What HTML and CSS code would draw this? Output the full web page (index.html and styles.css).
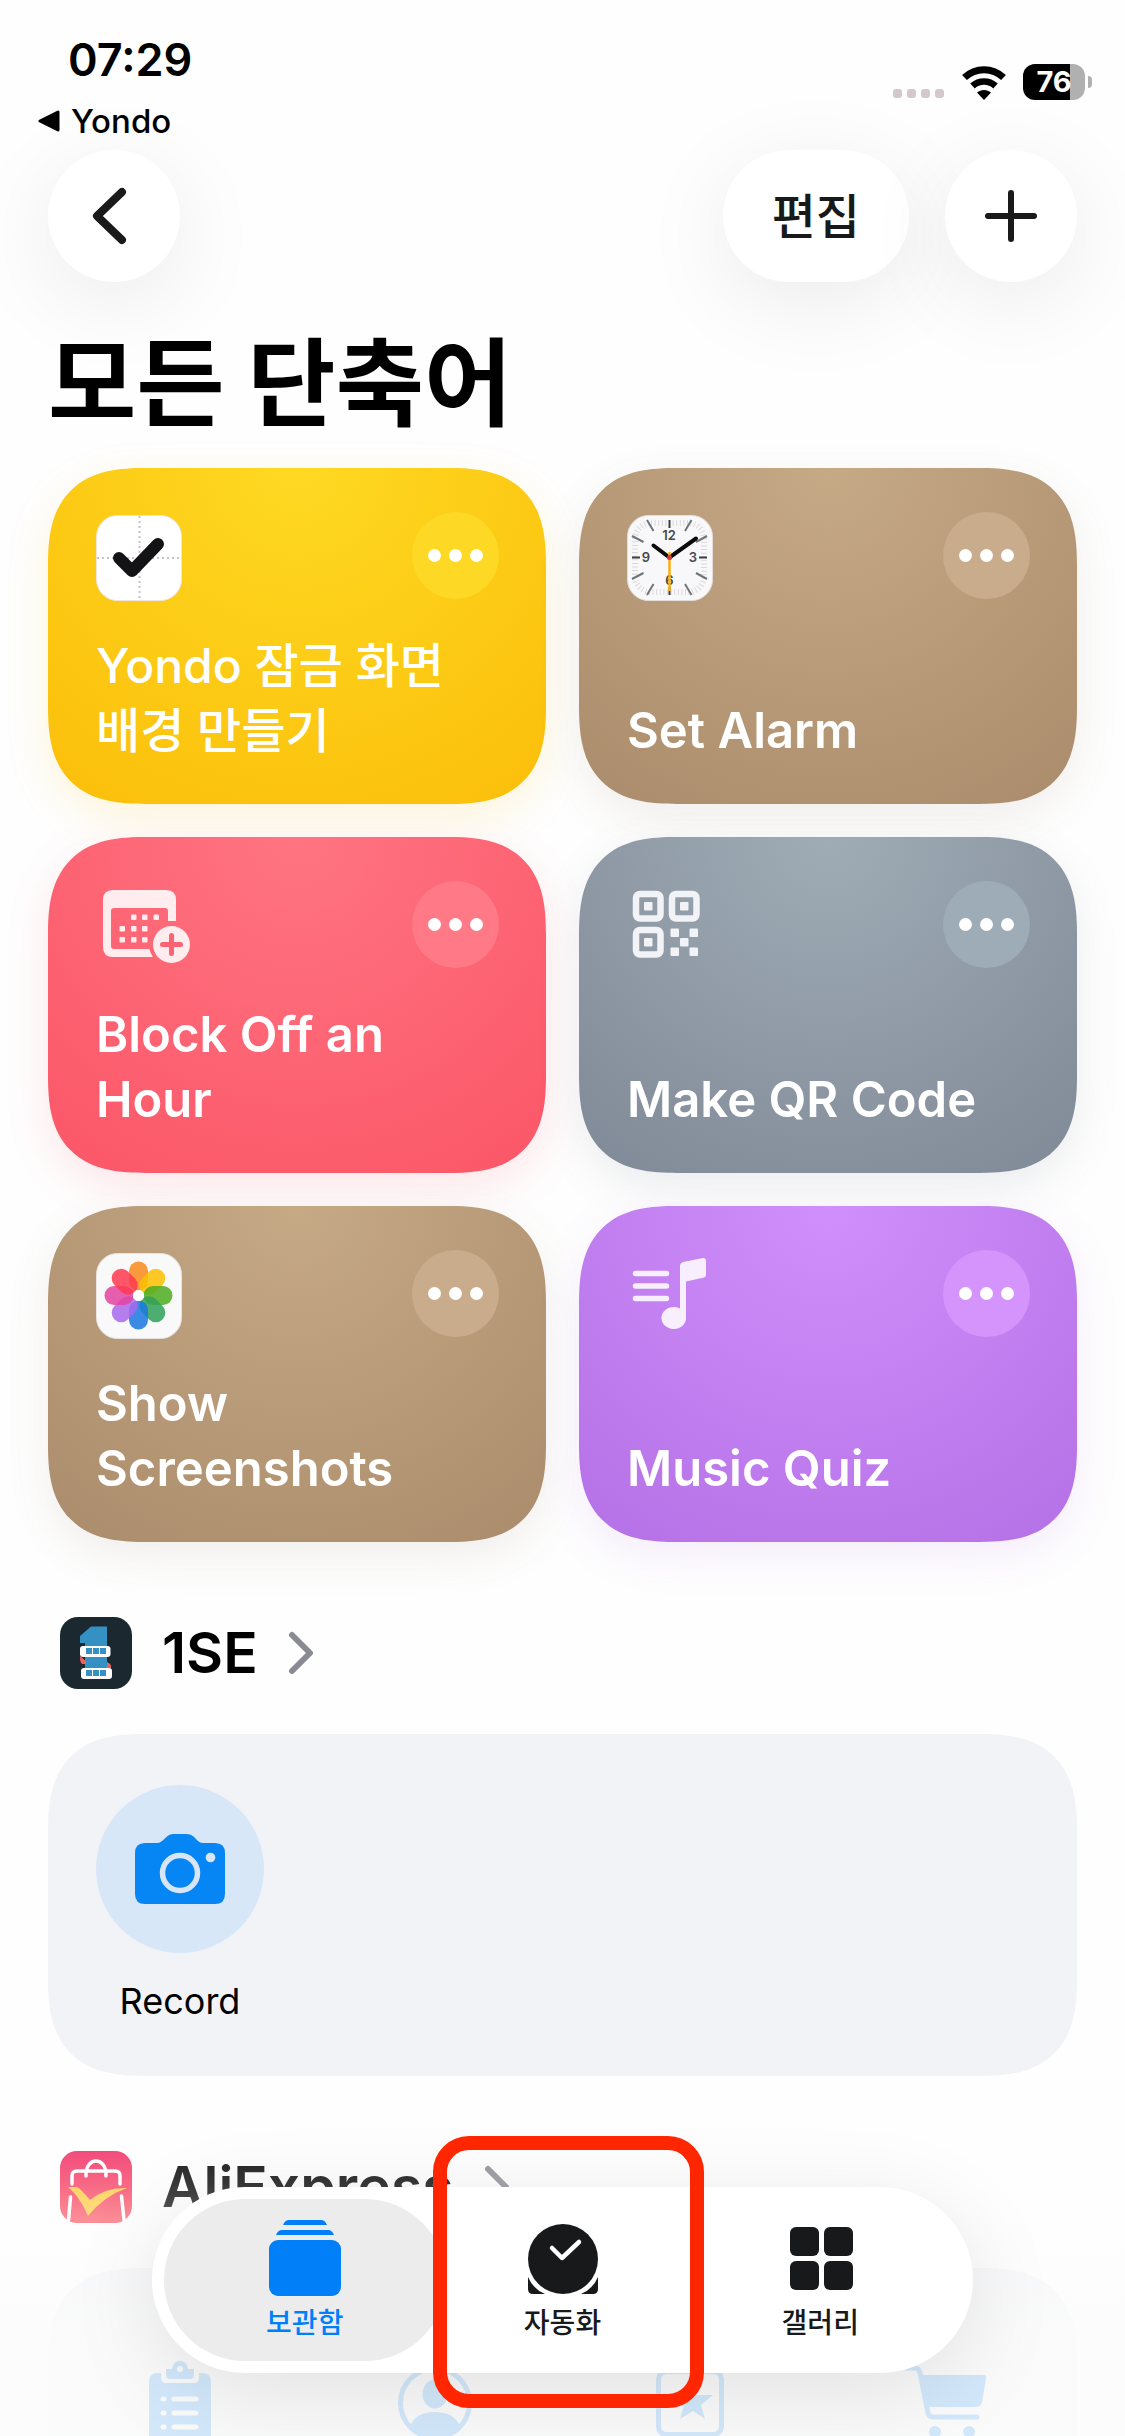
FILE: index.html
```
<!DOCTYPE html>
<html lang="ko">
<head>
  <meta charset="UTF-8" />
  <meta name="viewport" content="width=device-width, initial-scale=1.0"/>
  <title>모든 단축어</title>
  <link rel="stylesheet" href="styles.css">
</head>
<body>
<div class="screen">

  <div class="status-bar">
    <div class="status-left">
      <div class="time">07:29</div>
      <a class="back-app" href="#">
        <svg width="22" height="22" viewBox="0 0 22 22"><path d="M2 11L20 2V20Z" fill="#000" stroke="#000" stroke-width="3" stroke-linejoin="round"/></svg>
        Yondo
      </a>
    </div>
    <div class="status-right">
      <svg class="signal" width="52" height="10" viewBox="0 0 52 10" fill="#d3c9cd">
        <rect width="9" height="9" rx="3"/><rect x="14" width="9" height="9" rx="3"/><rect x="28" width="9" height="9" rx="3"/><rect x="42" width="9" height="9" rx="3"/>
      </svg>
      <svg width="46" height="34" viewBox="0 0 46 34">
        <path d="M3.5 11.5C14.500 1 31.500 1 42.500 11.500" fill="none" stroke="#000" stroke-width="7"/>
        <path d="M11.500 20C18 14 28 14 34.500 20" fill="none" stroke="#000" stroke-width="6.500"/>
        <path d="M23 34L16 26.500C20 23 26 23 30 26.500Z"/>
      </svg>
      <div class="battery"><span>76</span></div>
    </div>
  </div>

  <header class="toolbar">
    <button class="round-btn" aria-label="뒤로">
      <svg width="56" height="60" viewBox="0 0 56 60" fill="none" stroke="#1a1a1a" stroke-width="8" stroke-linecap="round" stroke-linejoin="round"><path d="M36 6L11 30L36 54"/></svg>
    </button>
    <div class="toolbar-right">
      <button class="round-btn edit-btn">편집</button>
      <button class="round-btn" aria-label="추가">
        <svg width="54" height="54" viewBox="0 0 54 54" stroke="#1a1a1a" stroke-width="6" stroke-linecap="round"><path d="M27 4V50M4 27H50"/></svg>
      </button>
    </div>
  </header>

  <main>
    <h1>모든 단축어</h1>

    <section class="cards">
      <article class="card yellow">
        <div class="card-top">
          <svg class="card-icon" width="86" height="86" viewBox="0 0 86 86">
            <rect x="0.500" y="0.500" width="85" height="85" rx="21" fill="#fff" stroke="#efe4e0"/>
            <path d="M43.500 1V85M1 43H85" stroke="#cbbfc9" stroke-width="2" stroke-dasharray="2 3"/>
            <path d="M23 43L36 56L62 29" fill="none" stroke="#131315" stroke-width="12" stroke-linecap="round" stroke-linejoin="round"/>
          </svg>
          <button class="more" aria-label="더 보기"><i></i><i></i><i></i></button>
        </div>
        <h2>Yondo 잠금 화면<br>배경 만들기</h2>
      </article>

      <article class="card brown">
        <div class="card-top">
          <svg class="card-icon" width="86" height="86" viewBox="0 0 86 86">
            <rect x="0.500" y="0.500" width="85" height="85" rx="21" fill="#f8f8fa" stroke="#e3dedd"/>
            <rect x="8" y="8" width="69" height="69" rx="16" fill="none" stroke="#dcd7db" stroke-width="6" stroke-dasharray="1 2.600"/>
            <g stroke="#6f757a" stroke-width="2">
              <path d="M20 5L26.500 16M64.500 5L58 16M5 21L16.500 27M80 21L69 27M5 64L16.500 58M80 64L69 58M20 80L26.500 69M64.500 80L58 69"/>
              <path d="M42.500 5V13M42.500 72V80M5 42.500H13M72 42.500H80" stroke="#3c3c3f"/>
            </g>
            <g font-size="13" font-weight="600" fill="#46484c" text-anchor="middle">
              <text x="42" y="25">12</text><text x="66" y="47">3</text><text x="42.500" y="70">6</text><text x="19" y="47">9</text>
            </g>
            <path d="M26.500 30.500L42.500 42.500L69 23.500" fill="none" stroke="#0b0b0c" stroke-width="4" stroke-linecap="round"/>
            <path d="M42.500 37V76" stroke="#f9ae12" stroke-width="2.500"/>
            <circle cx="42.500" cy="42.500" r="2.500" fill="#d8323a"/>
          </svg>
          <button class="more" aria-label="더 보기"><i></i><i></i><i></i></button>
        </div>
        <h2>Set Alarm</h2>
      </article>

      <article class="card red">
        <div class="card-top">
          <svg class="card-icon" width="96" height="86" viewBox="0 0 96 86" fill="#fff" fill-opacity="0.880">
            <mask id="badge-cut">
              <rect width="96" height="86" fill="#fff" fill-opacity="1"/>
              <circle cx="75.500" cy="60.500" r="22.500" fill="#000" fill-opacity="1"/>
            </mask>
            <g mask="url(#badge-cut)">
              <path fill-rule="evenodd" d="M17 6H70Q80 6 80 16V37H72V27Q72 24 69 24H18Q15 24 15 27V62Q15 65 18 65H60V73H17Q7 73 7 63V16Q7 6 17 6Z"/>
              <rect x="35" y="30.500" width="5.500" height="5.500" rx="1"/><rect x="46" y="30.500" width="5.500" height="5.500" rx="1"/><rect x="57.500" y="30.500" width="5.500" height="5.500" rx="1"/>
              <rect x="23.500" y="42" width="5.500" height="5.500" rx="1"/><rect x="35" y="42" width="5.500" height="5.500" rx="1"/><rect x="46" y="42" width="5.500" height="5.500" rx="1"/>
              <rect x="23.500" y="53" width="5.500" height="5.500" rx="1"/><rect x="35" y="53" width="5.500" height="5.500" rx="1"/><rect x="46" y="53" width="5.500" height="5.500" rx="1"/>
            </g>
            <circle cx="75.500" cy="60.500" r="18.500"/>
            <path d="M75.500 51.500V69.500M66.500 60.500H84.500" stroke="#fe6373" stroke-width="5" stroke-linecap="round"/>
          </svg>
          <button class="more" aria-label="더 보기"><i></i><i></i><i></i></button>
        </div>
        <h2>Block Off an<br>Hour</h2>
      </article>

      <article class="card gray">
        <div class="card-top">
          <svg class="card-icon" width="86" height="86" viewBox="0 0 86 86" fill="#f2f3f6">
            <g fill="none" stroke="#f2f3f6" stroke-width="6.500">
              <rect x="9" y="10" width="24.500" height="24.500" rx="4"/>
              <rect x="45" y="10" width="24.500" height="24.500" rx="4"/>
              <rect x="9" y="46" width="24.500" height="24.500" rx="4"/>
            </g>
            <rect x="17" y="18" width="8.500" height="8.500" rx="1"/><rect x="53" y="18" width="8.500" height="8.500" rx="1"/><rect x="17" y="54" width="8.500" height="8.500" rx="1"/>
            <rect x="43.500" y="44.500" width="8.500" height="8.500" rx="1"/><rect x="62.500" y="44.500" width="8.500" height="8.500" rx="1"/>
            <rect x="53" y="54" width="8.500" height="8.500" rx="1"/>
            <rect x="43.500" y="63.500" width="8.500" height="8.500" rx="1"/><rect x="62.500" y="63.500" width="8.500" height="8.500" rx="1"/>
          </svg>
          <button class="more" aria-label="더 보기"><i></i><i></i><i></i></button>
        </div>
        <h2>Make QR Code</h2>
      </article>

      <article class="card brown">
        <div class="card-top">
          <svg class="card-icon" width="86" height="86" viewBox="0 0 86 86">
            <rect x="0.500" y="0.500" width="85" height="85" rx="21" fill="#f9f9fa" stroke="#e8e2e0"/>
            <g fill-opacity="0.850">
              <rect x="33" y="8.500" width="19" height="29" rx="9.500" fill="#f98a1a"/>
              <rect x="33" y="8.500" width="19" height="29" rx="9.500" fill="#fcc000" transform="rotate(45 42.500 42.500)"/>
              <rect x="33" y="8.500" width="19" height="29" rx="9.500" fill="#4cad20" transform="rotate(90 42.500 42.500)"/>
              <rect x="33" y="8.500" width="19" height="29" rx="9.500" fill="#30a058" transform="rotate(135 42.500 42.500)"/>
              <rect x="33" y="8.500" width="19" height="29" rx="9.500" fill="#1a78e0" transform="rotate(180 42.500 42.500)"/>
              <rect x="33" y="8.500" width="19" height="29" rx="9.500" fill="#a868ec" transform="rotate(225 42.500 42.500)"/>
              <rect x="33" y="8.500" width="19" height="29" rx="9.500" fill="#e443a0" transform="rotate(270 42.500 42.500)"/>
              <rect x="33" y="8.500" width="19" height="29" rx="9.500" fill="#ff3a4e" transform="rotate(315 42.500 42.500)"/>
            </g>
            <circle cx="42.500" cy="42.500" r="5.500" fill="#fff"/>
          </svg>
          <button class="more" aria-label="더 보기"><i></i><i></i><i></i></button>
        </div>
        <h2>Show<br>Screenshots</h2>
      </article>

      <article class="card purple">
        <div class="card-top">
          <svg class="card-icon" width="86" height="86" viewBox="0 0 86 86" fill="#f7effd">
            <path d="M8.500 20.500H39.500M8.500 33H39.500M8.500 45.500H39.500" stroke="#f7effd" stroke-width="5.500" stroke-linecap="round"/>
            <path d="M53 13Q53 10 56 9L76 5Q79 4.500 79 7.500V22Q79 24 77 24.500L59 28.500V66A12.300 11 0 1 1 53 55.500Z"/>
          </svg>
          <button class="more" aria-label="더 보기"><i></i><i></i><i></i></button>
        </div>
        <h2>Music Quiz</h2>
      </article>
    </section>

    <section class="app-section">
      <a class="app-head" href="#">
        <svg width="72" height="72" viewBox="0 0 72 72">
          <rect width="72" height="72" rx="18" fill="#1b2830"/>
          <path d="M20 19L31 9.500H47V61H25V26H20Z" fill="#3590c4"/>
          <path d="M20 39L26 44V47H22Q20 45 20 42ZM51 51Q52 47 47 45V52Z" fill="#f0605c"/>
          <rect x="20" y="29" width="30.500" height="11" rx="3" fill="#fff"/>
          <rect x="21" y="51" width="31" height="11" rx="3" fill="#fff"/>
          <g fill="#3590c4">
            <rect x="26" y="31" width="6" height="6"/><rect x="33" y="31" width="6" height="6"/><rect x="40" y="31" width="6" height="6"/>
            <rect x="26" y="53" width="6" height="6"/><rect x="33" y="53" width="6" height="6"/><rect x="40" y="53" width="6" height="6"/>
          </g>
        </svg>
        <h2>1SE</h2>
        <svg class="chevron" width="26" height="44" viewBox="0 0 26 44"><path d="M4 4L22 22L4 40"/></svg>
      </a>
      <div class="panel">
        <button class="action">
          <span class="action-icon">
            <svg width="90" height="70" viewBox="0 0 90 70">
              <path fill="#0686f5" d="M10 9H22Q25 9 27 7L32 2.500Q34 0 38 0H52Q56 0 58.500 2.500L63 7Q65 9 68 9H80Q90 9 90 19V60Q90 70 80 70H10Q0 70 0 60V19Q0 9 10 9Z"/>
              <circle cx="45" cy="39" r="17.500" fill="none" stroke="#d8e5f6" stroke-width="5.500"/>
              <circle cx="75.500" cy="23.500" r="4.800" fill="#d8e5f6"/>
            </svg>
          </span>
          Record
        </button>
      </div>
    </section>

    <section class="app-section">
      <a class="app-head" href="#">
        <svg width="72" height="72" viewBox="0 0 72 72">
          <defs><linearGradient id="ali" x1="0" y1="0" x2="0" y2="1"><stop offset="0" stop-color="#f0306a"/><stop offset="1" stop-color="#fb4c58"/></linearGradient></defs>
          <rect width="72" height="72" rx="17" fill="url(#ali)"/>
          <g fill="none" stroke="#fff" stroke-width="3.500" stroke-linecap="round">
            <path d="M26 25C25 5 47 5 46 25M12 33V25Q12 20 17 20H55Q60 20 60 25V33M10.500 46L8.500 69M61.500 45L64 69"/>
          </g>
          <path d="M8 36H17Q21 38 30 49Q46 36 67 37Q44 45 28 65Q20 46 8 36Z" fill="#ffc83c"/>
        </svg>
        <h2>AliExpress</h2>
        <svg class="chevron" width="26" height="44" viewBox="0 0 26 44"><path d="M4 4L22 22L4 40"/></svg>
      </a>
      <div class="panel plain">
        <button class="action" aria-label="주문">
          <span class="action-icon">
            <svg width="62" height="84" viewBox="0 0 62 84">
              <path fill="#0686f5" d="M9 12H12V17Q12 22 17 22H45Q50 22 50 17V12H53Q62 12 62 21V75Q62 84 53 84H9Q0 84 0 75V21Q0 12 9 12ZM17 8H23Q24 0 31 0Q38 0 39 8H45V14Q45 18 41 18H21Q17 18 17 14Z"/>
              <path d="M14 38H15M25 38H47M14 52H15M25 52H47M14 66H15M25 66H47" stroke="#f2f3f6" stroke-width="5" stroke-linecap="round"/>
              <circle cx="31" cy="8" r="3" fill="#f2f3f6"/>
            </svg>
          </span>
        </button>
        <button class="action" aria-label="계정">
          <span class="action-icon">
            <svg width="74" height="74" viewBox="0 0 74 74" fill="#0686f5">
              <circle cx="37" cy="37" r="34.500" fill="none" stroke="#0686f5" stroke-width="5"/>
              <ellipse cx="37" cy="28" rx="12.500" ry="14.500"/>
              <path d="M12 60Q18 46 37 46Q56 46 62 60Q50 71 37 71Q24 71 12 60Z"/>
            </svg>
          </span>
        </button>
        <button class="action" aria-label="위시리스트">
          <span class="action-icon">
            <svg width="68" height="68" viewBox="0 0 68 68" fill="#0686f5">
              <rect x="2.500" y="2.500" width="63" height="63" rx="8" fill="none" stroke="#0686f5" stroke-width="5"/>
              <path d="M37 12L41.500 26H57L45 36L49 50L37 42L24 50L28 36L16 26H32Z"/>
            </svg>
          </span>
        </button>
        <button class="action" aria-label="장바구니">
          <span class="action-icon">
            <svg width="84" height="76" viewBox="0 0 84 76" fill="#0686f5">
              <path d="M3 3H12Q16 3 17 8L25 48Q26 52 30 52H74" fill="none" stroke="#0686f5" stroke-width="5" stroke-linecap="round"/>
              <path d="M19 10H81Q84 10 83 14L79 37Q78 42 73 42H26Z"/>
              <circle cx="32" cy="67" r="6"/><circle cx="66" cy="67" r="6"/>
            </svg>
          </span>
        </button>
      </div>
    </section>
  </main>

  <footer class="tab-area">
    <nav class="tab-bar">
      <button class="tab active">
        <svg width="72" height="78" viewBox="0 0 72 78" fill="#007ff9">
          <path d="M14 6Q16 1 20 1H52Q56 1 58 6ZM7 16Q9 11 13 11H59Q63 11 65 16Z"/>
          <rect y="21" width="72" height="56" rx="9"/>
        </svg>
        보관함
      </button>
      <button class="tab marked">
        <svg width="72" height="78" viewBox="0 0 72 78" fill="#18191a">
          <circle cx="36" cy="40" r="35"/>
          <path d="M1 58Q6 70 18 75H6Q1 75 1 70ZM71 58Q66 70 54 75H66Q71 75 71 70Z"/>
          <path d="M25 29L35 39L52 23" fill="none" stroke="#fff" stroke-width="4.500" stroke-linecap="round" stroke-linejoin="round"/>
        </svg>
        자동화
      </button>
      <button class="tab">
        <svg width="72" height="78" viewBox="0 0 72 78" fill="#18191a">
          <rect x="6" y="8" width="29" height="29" rx="6"/><rect x="40" y="8" width="29" height="29" rx="6"/>
          <rect x="6" y="42" width="29" height="29" rx="6"/><rect x="40" y="42" width="29" height="29" rx="6"/>
        </svg>
        갤러리
      </button>
    </nav>
  </footer>

</div>
</body>
</html>
```
FILE: styles.css
```
:root {
  --blue: #007ff9;
  --ink: #18191a;
  --panel: #f2f3f6;
  --gutter: 48px;
}

* {
  box-sizing: border-box;
}

body {
  margin: 0;
  background: #fefefe;
  color: #000;
  font-family: Inter, "Noto Sans CJK KR", sans-serif;
}

h1, h2 {
  margin: 0;
}

a {
  color: inherit;
  text-decoration: none;
}

button {
  border: none;
  padding: 0;
  background: none;
  font-family: inherit;
  color: inherit;
  cursor: pointer;
}

svg {
  display: block;
  flex: none;
}

.screen {
  position: relative;
  height: 100vh;
  overflow: hidden;
}

/* status bar */
.status-bar {
  display: flex;
  justify-content: space-between;
  height: 150px;
  padding: 33px 32px 0 38px;
}

.time {
  padding-left: 30px;
  font-size: 45px;
  line-height: 54px;
  font-weight: 600;
}

.back-app {
  display: flex;
  align-items: center;
  gap: 11px;
  margin-top: 14px;
  font-size: 33px;
  line-height: 40px;
  font-weight: 500;
}

.status-right {
  display: flex;
  align-items: flex-end;
  gap: 16px;
  height: 67px;
}

.signal {
  margin-bottom: 1px;
}

.battery {
  position: relative;
  width: 62px;
  height: 36px;
  margin-right: 8px;
  border-radius: 12px;
  background: linear-gradient(90deg, #000 76%, #b0b0b0 76%);
  color: #fff;
  font-size: 29px;
  line-height: 36px;
  font-weight: 700;
  text-align: center;
}

.battery::after {
  content: "";
  position: absolute;
  left: 65px;
  top: 12px;
  width: 4px;
  height: 12px;
  border-radius: 0 6px 6px 0;
  background: #b0b0b0;
}

/* toolbar */
.toolbar {
  display: flex;
  justify-content: space-between;
  padding: 0 var(--gutter);
}

.toolbar-right {
  display: flex;
  gap: 36px;
}

.round-btn {
  display: flex;
  align-items: center;
  justify-content: center;
  min-width: 132px;
  height: 132px;
  border-radius: 66px;
  background: #fff;
  box-shadow: 0 20px 90px rgba(0, 0, 0, 0.08);
}

.edit-btn {
  padding: 0 49px 6px;
  font-size: 48px;
  font-weight: 500;
  color: var(--ink);
}

main {
  padding: 0 var(--gutter);
}

h1 {
  padding: 45px 0 29px;
  font-size: 96px;
  line-height: 112px;
  font-weight: 700;
}

/* shortcut cards */
.cards {
  display: grid;
  grid-template-columns: 1fr 1fr;
  gap: 33px;
}

.card {
  display: flex;
  flex-direction: column;
  justify-content: space-between;
  min-height: 336px;
  padding: 44px 47px 41px 48px;
  border-radius: 78px;
  background: radial-gradient(circle 420px at 50% 0, var(--light), var(--dark));
  box-shadow: 0 14px 44px var(--glow);
  color: #fff;
}

.card h2 {
  font-size: 49px;
  line-height: 65px;
  font-weight: 600;
}

.card.yellow h2 {
  font-size: 48px;
  font-weight: 500;
}

.card-top {
  display: flex;
  justify-content: space-between;
}

.card-icon {
  margin-top: 3px;
}

.yellow {
  --light: #fed923;
  --dark: #fbbe09;
  --more: #fdd824;
  --glow: rgba(250, 190, 10, 0.15);
}

.brown {
  --light: #c6a985;
  --dark: #aa8c6c;
  --more: #c8ac8c;
  --glow: rgba(120, 95, 70, 0.1);
}

.red {
  --light: #ff7482;
  --dark: #fb5667;
  --more: #ff7987;
  --glow: rgba(250, 90, 105, 0.15);
}

.gray {
  --light: #9facb5;
  --dark: #808997;
  --more: #9dacb7;
  --glow: rgba(100, 110, 120, 0.12);
}

.purple {
  --light: #d08ffc;
  --dark: #b470e5;
  --more: #d593fc;
  --glow: rgba(180, 110, 230, 0.12);
}

.more {
  display: flex;
  align-items: center;
  justify-content: center;
  gap: 8px;
  width: 87px;
  height: 87px;
  border-radius: 50%;
  background: var(--more);
}

.more i {
  width: 13px;
  height: 13px;
  border-radius: 50%;
  background: #fff;
}

/* app sections */
.app-section {
  padding-top: 75px;
}

.app-head {
  display: flex;
  align-items: center;
  gap: 30px;
  height: 72px;
  padding-left: 12px;
}

.app-head h2 {
  font-size: 57px;
  line-height: 72px;
  font-weight: 600;
}

.chevron path {
  fill: none;
  stroke: #8a8a92;
  stroke-width: 6;
  stroke-linecap: round;
  stroke-linejoin: round;
}

.panel {
  display: flex;
  gap: 87px;
  min-height: 342px;
  margin-top: 45px;
  padding: 51px 48px;
  border-radius: 72px;
  background: var(--panel);
}

.action {
  display: flex;
  flex-direction: column;
  align-items: center;
  gap: 25px;
  font-size: 36px;
  line-height: 46px;
}

.action-icon {
  display: flex;
  align-items: center;
  justify-content: center;
  width: 168px;
  height: 168px;
  border-radius: 50%;
  background: #d8e7f8;
}

.panel.plain .action-icon {
  background: none;
}

/* rounder, smoother corners where the browser has them */
@supports (corner-shape: superellipse(1.4)) {
  .card,
  .panel {
    border-radius: 98px;
    corner-shape: superellipse(1.4);
  }
}

/* tab bar floats over the scrolled content */
.tab-area {
  position: absolute;
  left: 0;
  right: 0;
  bottom: 0;
  display: flex;
  justify-content: center;
  padding: 87px 0 63px;
  background: linear-gradient(rgba(255, 255, 255, 0), rgba(255, 255, 255, 0.22) 25%, rgba(252, 252, 252, 0.83) 68%);
}

.tab-bar {
  display: flex;
  width: 73%;
  padding: 12px;
  border-radius: 93px;
  background: #fff;
  box-shadow: 0 20px 90px rgba(0, 0, 0, 0.1);
}

.tab {
  position: relative;
  display: flex;
  flex: 1;
  flex-direction: column;
  align-items: center;
  height: 162px;
  padding-top: 20px;
  border-radius: 81px;
  gap: 6px;
  font-size: 28px;
  line-height: 40px;
  font-weight: 500;
  color: var(--ink);
}

.tab + .tab {
  margin-left: -24px;
}

.tab.active {
  background: #ececec;
  color: var(--blue);
}

/* red frame round the tab */
.tab.marked::after {
  content: "";
  position: absolute;
  inset: -63px -1px -47px 11px;
  border: 14px solid #ff2600;
  border-radius: 36px;
}
```
